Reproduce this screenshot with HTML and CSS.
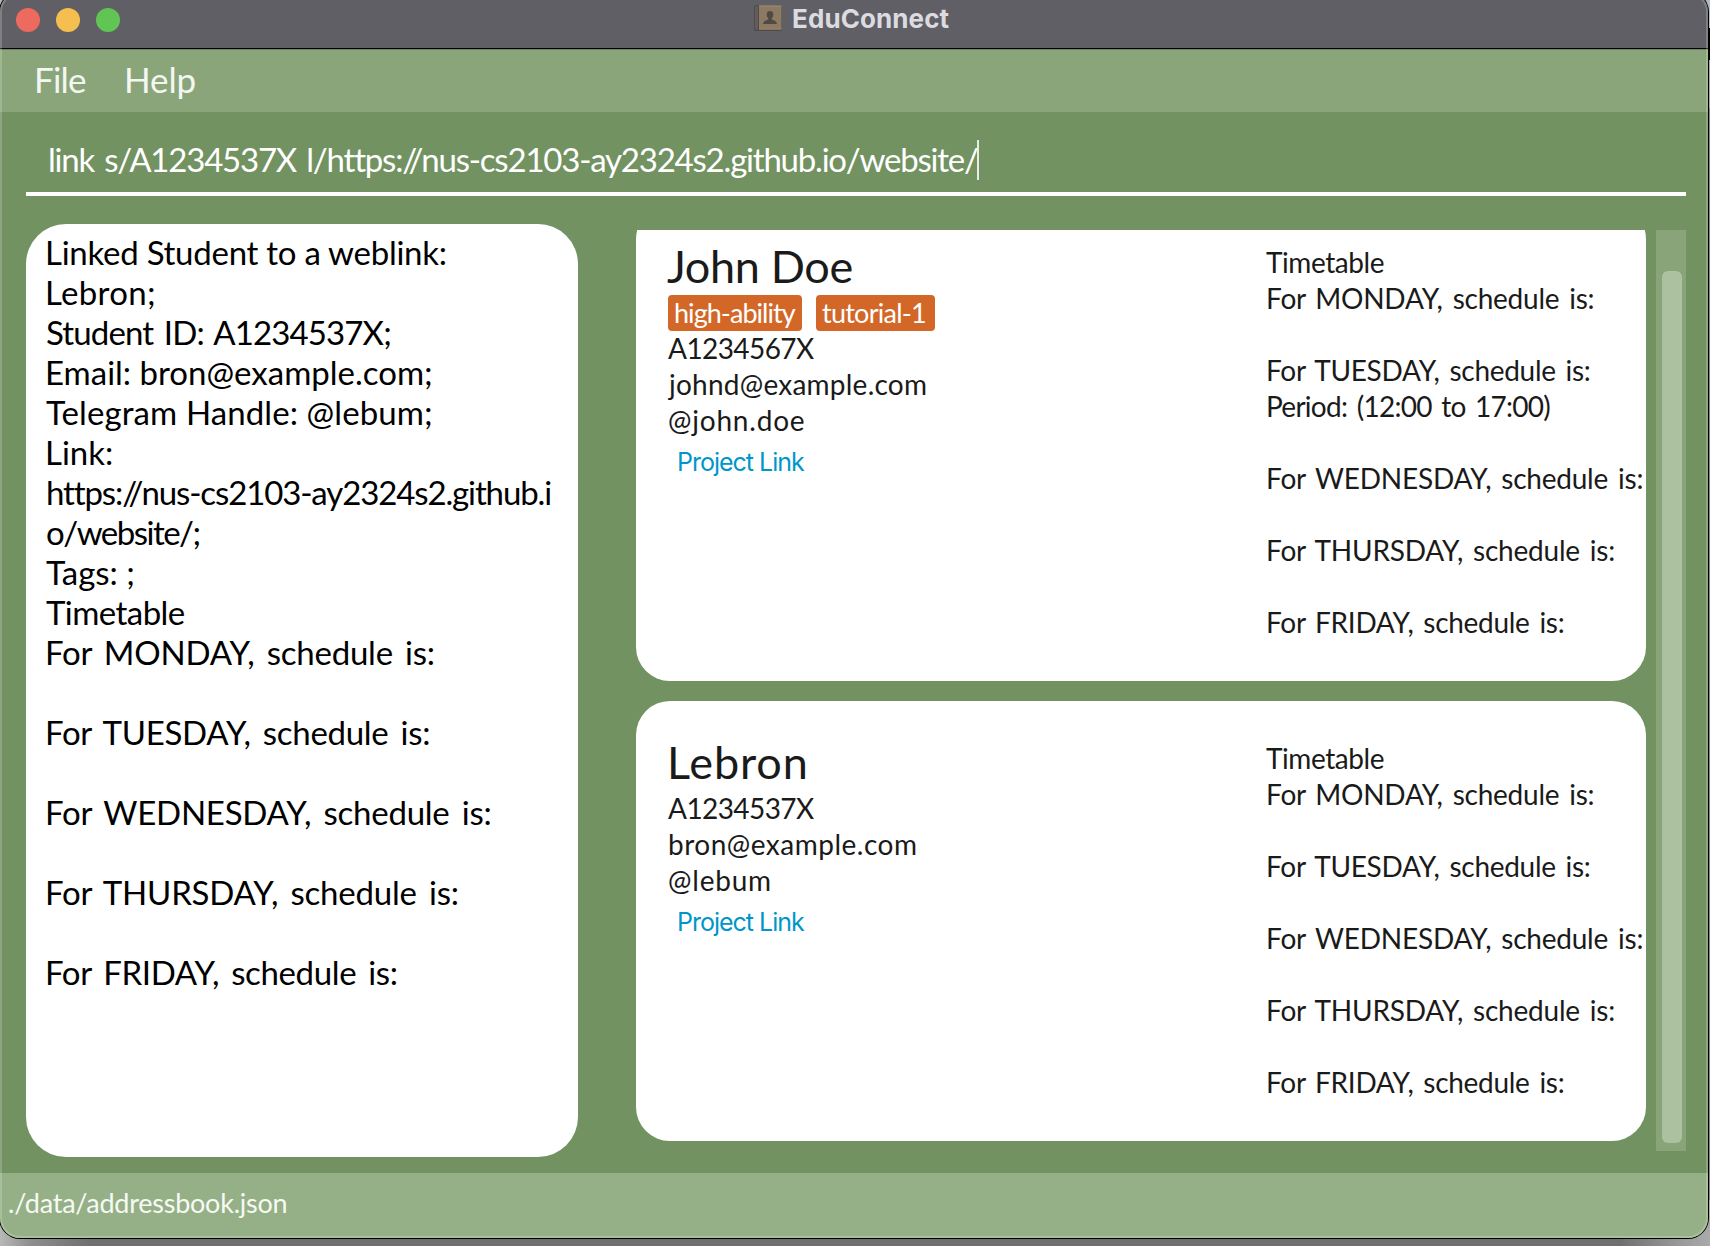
FILE: index.html
```html
<!DOCTYPE html>
<html lang="en">
<head>
<meta charset="utf-8">
<title>EduConnect</title>
<link rel="stylesheet" href="styles.css">
</head>
<body>
<div class="window">
  <header class="titlebar">
    <div class="lights"><i class="red"></i><i class="yellow"></i><i class="green"></i></div>
    <div class="title">
      <svg class="book" width="30" height="28" viewBox="0 0 30 28">
        <rect x="0" y="1" width="28" height="26" rx="1.5" fill="#4e4b4c"/>
        <rect x="1" y="2" width="3" height="23.500" fill="#625d5c"/>
        <rect x="5" y="1.500" width="22.500" height="24" fill="#8c7b62"/>
        <path d="M5 1.500h22.500v1H5z" fill="#9c8e75"/>
        <path d="M5 24.500h22.500v1H5z" fill="#a0855a"/>
        <path d="M16 7c2.200 0 3.300 1.500 3.300 3.500 0 1.700-.7 2.800-1.500 3.600v1.400c1.400.9 4.800 1.200 5.200 4.500H9c.4-3.300 3.800-3.600 5.200-4.500v-1.400c-.8-.8-1.500-1.900-1.500-3.600C12.700 8.500 13.800 7 16 7z" fill="#514a43"/>
      </svg>
      <span>EduConnect</span>
    </div>
  </header>
  <nav class="menubar"><span class="file">File</span><span class="help">Help</span></nav>
  <div class="command"><span class="command-text">link s/A1234537X l/https://nus-cs2103-ay2324s2.github.io/website/</span><i class="caret"></i></div>
  <main class="content">
    <section class="result">
      <p>Linked Student to a weblink:</p>
      <p>Lebron;</p>
      <p class="in">Student ID: A1234537X;</p>
      <p>Email: bron@example.com;</p>
      <p class="in">Telegram Handle: @lebum;</p>
      <p>Link:</p>
      <p class="in">https://nus-cs2103-ay2324s2.github.i</p>
      <p class="in">o/website/;</p>
      <p class="in">Tags: ;</p>
      <p class="in">Timetable</p>
      <p>For MONDAY, schedule is:</p>
      <p></p>
      <p>For TUESDAY, schedule is:</p>
      <p></p>
      <p>For WEDNESDAY, schedule is:</p>
      <p></p>
      <p>For THURSDAY, schedule is:</p>
      <p></p>
      <p>For FRIDAY, schedule is:</p>
    </section>
    <section class="list">
      <div class="cards">
        <article class="card first">
          <div class="info">
            <h2 class="john">John Doe</h2>
            <div class="tags"><span class="tag ability">high-ability</span><span class="tag tutorial">tutorial-1</span></div>
            <p class="id">A1234567X</p>
            <p class="john-mail">johnd@example.com</p>
            <p class="handle">@john.doe</p>
            <a class="link">Project Link</a>
          </div>
          <div class="timetable">
            <p class="heading">Timetable</p>
            <p class="mon">For MONDAY, schedule is:</p>
            <p></p>
            <p class="tue">For TUESDAY, schedule is:</p>
            <p class="period">Period: (12:00 to 17:00)</p>
            <p></p>
            <p class="wed">For WEDNESDAY, schedule is:</p>
            <p></p>
            <p class="thu">For THURSDAY, schedule is:</p>
            <p></p>
            <p class="fri">For FRIDAY, schedule is:</p>
          </div>
        </article>
        <article class="card">
          <div class="info">
            <h2 class="lebron">Lebron</h2>
            <p class="id">A1234537X</p>
            <p class="lebron-mail">bron@example.com</p>
            <p class="handle">@lebum</p>
            <a class="link">Project Link</a>
          </div>
          <div class="timetable">
            <p class="heading">Timetable</p>
            <p class="mon">For MONDAY, schedule is:</p>
            <p></p>
            <p class="tue">For TUESDAY, schedule is:</p>
            <p></p>
            <p class="wed">For WEDNESDAY, schedule is:</p>
            <p></p>
            <p class="thu">For THURSDAY, schedule is:</p>
            <p></p>
            <p class="fri">For FRIDAY, schedule is:</p>
          </div>
        </article>
      </div>
      <div class="track"><div class="thumb"></div></div>
    </section>
  </main>
  <footer class="status">./data/addressbook.json</footer>
</div>
</body>
</html>
```
FILE: styles.css
```css
* { box-sizing: border-box; margin: 0; padding: 0; }
html, body { width: 1710px; height: 1246px; overflow: hidden; }
body {
  background:
    linear-gradient(#b4bac6 0 28px, #000 28px 60px, #a5a3a6 60px 108px, #858387 108px) right top / 3px 1200px no-repeat,
    linear-gradient(90deg, #b8b8b8, #8e8e8e 30px, #6f6f6f 90px, #6f6f6f 1620px, #999 1680px, #aaa) #777;
  font-family: Lato, "Open Sans", sans-serif;
  white-space: nowrap;
}
/* The title bar's top edge is cut off by the viewport */
.window {
  position: relative;
  display: flex;
  flex-direction: column;
  width: 1708px;
  height: 1246px;
  margin-top: -8px;
  border-radius: 20px;
  overflow: hidden;
  background: #729262;
  box-shadow: 0 0 0 1px #000;
}
.window::after {
  content: "";
  position: absolute;
  inset: 0;
  border: 2px solid rgba(255, 255, 255, .2);
  border-radius: 20px;
}
.titlebar {
  display: grid;
  grid-template-columns: 754px 1fr;
  height: 57px;
  padding-top: 8px;
  background: #605f66;
  border-bottom: 1px solid #000;
}
.lights { display: flex; gap: 16px; padding: 8px 0 0 16px; }
.lights i { width: 24px; height: 24px; border-radius: 50%; }
.red { background: #ed6a5e; }
.yellow { background: #f5bf4f; }
.green { background: #61c554; }
.title { display: flex; gap: 8px; color: #dcdbe0; font: bold 26px/37px Inter, sans-serif; }
.title span { letter-spacing: .1px; }
.book { margin-top: 4px; }

.menubar {
  display: flex;
  height: 63px;
  padding-left: 34px;
  border-top: 1px solid #6f8561;
  background: #8aa579;
  color: #f3f6f1;
  font-size: 35px;
  line-height: 58px;
}
.file { width: 90px; letter-spacing: -.79px; }
.help { letter-spacing: -.14px; }

.command {
  display: flex;
  height: 84px;
  margin: 0 22px 0 26px;
  padding: 27px 0 0 22px;
  border-bottom: 4px solid #fff;
  color: #fff;
  font-size: 33px;
  line-height: 40px;
}
.command-text { width: 929px; letter-spacing: -1.21px; word-spacing: 3px; }
.caret { width: 2px; height: 40px; margin-top: 1px; background: #e8eee5; }

.content { display: flex; gap: 58px; height: 977px; padding: 28px 22px 0 26px; }
.result {
  width: 552px;
  height: 933px;
  padding: 8px 19px;
  border-radius: 40px;
  background: #fff;
  color: #000;
  font-size: 33px;
}
.result p { height: 40px; line-height: 40px; }
.result .in { margin-left: 1px; }
.result p:nth-child(1) { letter-spacing: -.26px; }
.result p:nth-child(2) { letter-spacing: .3px; }
.result p:nth-child(3) { letter-spacing: -.87px; word-spacing: 3px; }
.result p:nth-child(4), .result p:nth-child(6) { letter-spacing: 0; }
.result p:nth-child(5) { letter-spacing: .1px; }
.result p:nth-child(7) { letter-spacing: -1.12px; }
.result p:nth-child(8) { letter-spacing: -1.5px; }
.result p:nth-child(10) { letter-spacing: -.55px; }
.result p:nth-child(n+11) { word-spacing: 4px; }
.result p:nth-child(11) { letter-spacing: -.22px; }
.result p:nth-child(13) { letter-spacing: -.3px; }
.result p:nth-child(15) { letter-spacing: -.24px; }
.result p:nth-child(17) { letter-spacing: -.22px; }
.result p:nth-child(19) { letter-spacing: -.37px; }

.list { display: flex; gap: 10px; height: 921px; margin-top: 6px; }
.cards { display: flex; flex-direction: column; gap: 20px; width: 1010px; overflow: hidden; }
.card {
  display: grid;
  grid-template-columns: 598px 1fr;
  flex: none;
  height: 440px;
  padding-left: 32px;
  border-radius: 34px;
  background: #fff;
  color: #1a1a1a;
  font-size: 28px;
}
/* The list is scrolled, so the first card starts above its viewport */
.card.first { height: 476px; margin-top: -25px; }
.info { padding-top: 36px; }
.info p, .timetable p { height: 36px; line-height: 36px; }
h2 { height: 53px; font-size: 45px; font-weight: 400; line-height: 50px; }
.john { margin-left: -1px; letter-spacing: -.35px; }
.lebron { margin-left: -1px; letter-spacing: .85px; }
.tags { display: flex; gap: 14px; height: 36px; margin: 1px 0 -1px; }
.tag {
  padding-left: 6px;
  border-radius: 4px;
  background: #d36727;
  color: #fff;
  font-size: 27px;
  line-height: 36px;
}
.ability { width: 134px; letter-spacing: -.95px; }
.tutorial { width: 119px; letter-spacing: -.75px; }
.id { letter-spacing: -.58px; }
.john-mail { margin-left: 1px; letter-spacing: .24px; }
.lebron-mail { letter-spacing: .5px; }
.handle { letter-spacing: .8px; }
.link {
  display: block;
  margin: 6px 0 0 9px;
  color: #0096c9;
  font: 25px/36px Inter, sans-serif;
  letter-spacing: -1px;
}
.timetable { padding-top: 39px; word-spacing: 3px; }
.heading { letter-spacing: -.42px; }
.mon { letter-spacing: -.24px; }
.wed, .thu { letter-spacing: -.22px; }
.tue, .fri { letter-spacing: -.3px; }
.period { letter-spacing: -.73px; }

.track { width: 30px; padding: 41px 4px 8px 6px; background: #8aa479; }
.thumb { height: 100%; border-radius: 6px; background: #acc19f; }

.status {
  flex: 1;
  padding-left: 8px;
  background: #95b086;
  color: #f7f9f5;
  font-size: 27px;
  letter-spacing: -.24px;
  line-height: 60px;
}
```
